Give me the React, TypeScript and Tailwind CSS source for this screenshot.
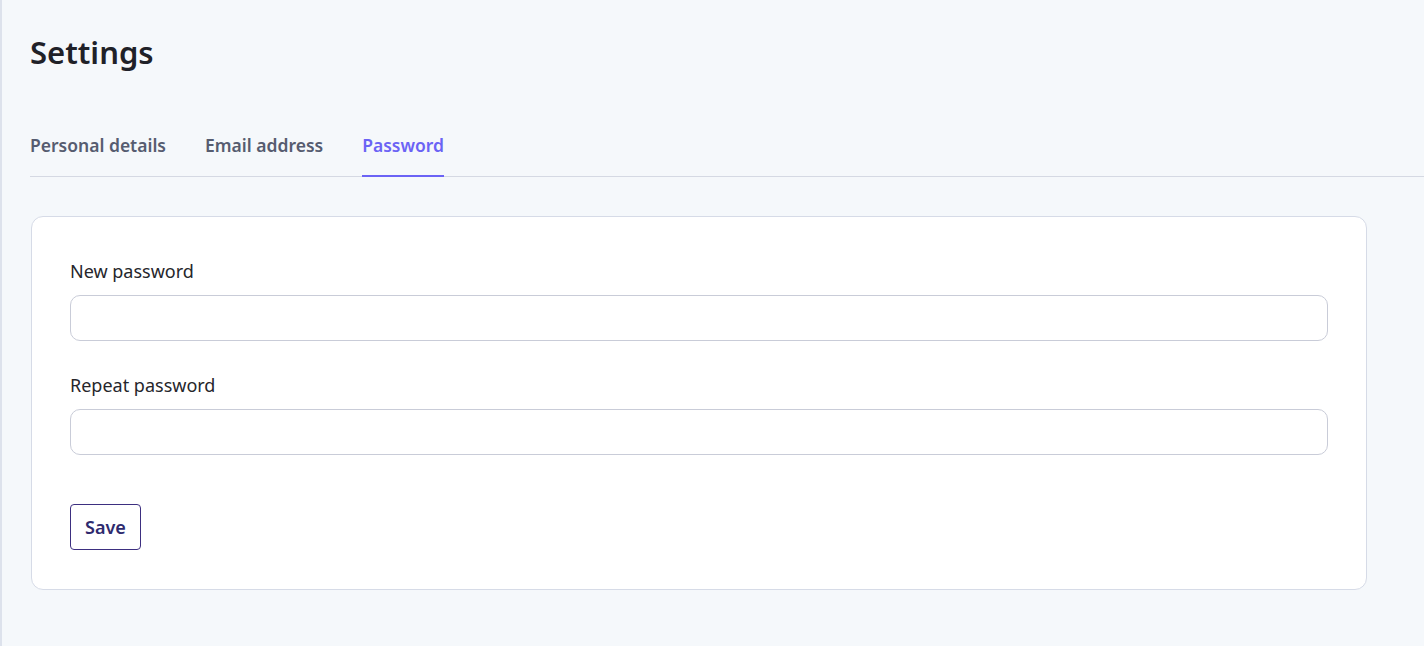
import React from 'react';

const tabs = ['Personal details', 'Email address', 'Password'];

const Field: React.FC<{ label: string; className?: string }> = ({ label, className }) => (
  <div className={className}>
    <label className="block text-[18px] leading-[28px] text-[#26262b] mb-[10px]">{label}</label>
    <input
      type="password"
      className="block w-full h-[46px] rounded-[10px] border border-[#c9ccd8] bg-white px-4 outline-none"
    />
  </div>
);

export default function App() {
  const active = 'Password';

  return (
    <div
      className="min-h-[646px] bg-[#f5f8fb] border-l-2 border-[#dde2ec] pl-[28px] pt-[33px]"
      style={{ fontFamily: '"Noto Sans", "Open Sans", sans-serif' }}
    >
      {/* Header */}
      <h1 className="text-[31px] leading-[38px] font-semibold text-[#1f2128]">Settings</h1>

      {/* Tabs */}
      <div className="mt-[60px] flex gap-[39px] border-b border-[#d5d9e3]">
        {tabs.map((tab) => (
          <button
            key={tab}
            className={`pb-[16px] text-[17.5px] leading-[28px] font-semibold -mb-px border-b-2 ${
              tab === active ? 'text-[#6b63f5] border-[#6b63f5]' : 'text-[#565c70] border-transparent'
            }`}
          >
            {tab}
          </button>
        ))}
      </div>

      {/* Card */}
      <div className="mt-[39px] ml-px mr-[57px] rounded-[12px] border border-[#d6dbe7] bg-white px-[38px] pt-[40px] pb-[39px]">
        <Field label="New password" />
        <Field label="Repeat password" className="mt-[30px]" />
        <button className="mt-[49px] h-[46px] w-[71px] rounded-[4px] border border-[#3d2f80] text-[18px] font-semibold text-[#2e2a6e] bg-white">
          Save
        </button>
      </div>
    </div>
  );
}
